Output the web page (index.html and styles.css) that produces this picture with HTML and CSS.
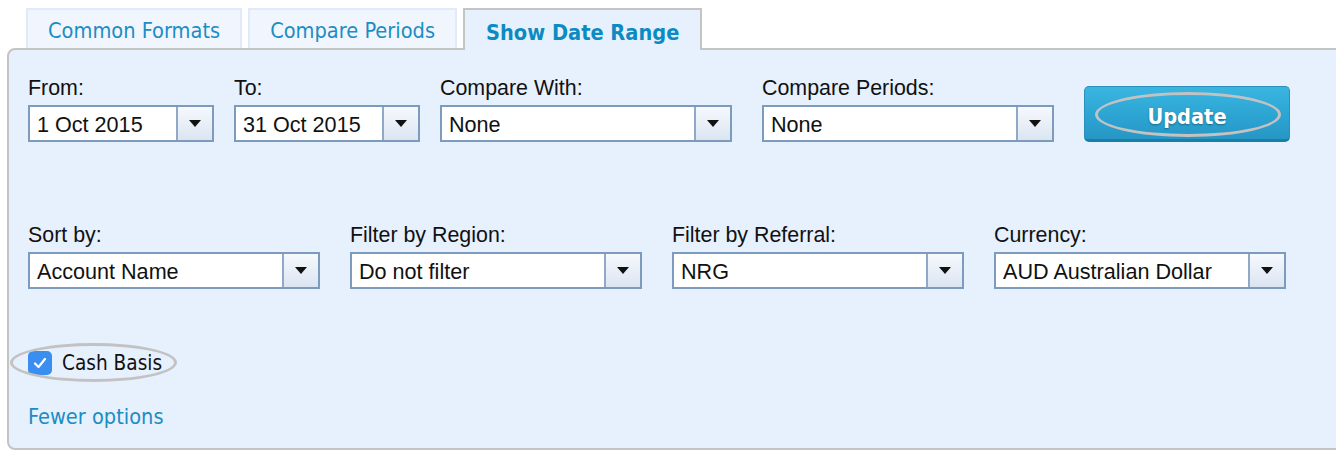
FILE: index.html
```html
<!DOCTYPE html>
<html lang="en">
<head>
	<meta charset="UTF-8">
	<title>Report Options</title>
	<link rel="stylesheet" href="styles.css">
</head>
<body>
	<div class="tabs">
		<div class="tab">Common Formats</div>
		<div class="tab">Compare Periods</div>
		<div class="tab active">Show Date Range</div>
	</div>

	<div class="panel">
		<div class="row">
			<div class="field small">
				<label>From:</label>
				<div class="select"><span class="value">1 Oct 2015</span><span class="arrow"></span></div>
			</div>
			<div class="field small">
				<label>To:</label>
				<div class="select"><span class="value">31 Oct 2015</span><span class="arrow"></span></div>
			</div>
			<div class="field wide">
				<label>Compare With:</label>
				<div class="select"><span class="value">None</span><span class="arrow"></span></div>
			</div>
			<div class="field wide">
				<label>Compare Periods:</label>
				<div class="select"><span class="value">None</span><span class="arrow"></span></div>
			</div>
			<button class="btnUpdate"><span>Update</span></button>
		</div>

		<div class="row row2">
			<div class="field wide">
				<label>Sort by:</label>
				<div class="select"><span class="value">Account Name</span><span class="arrow"></span></div>
			</div>
			<div class="field wide">
				<label>Filter by Region:</label>
				<div class="select"><span class="value">Do not filter</span><span class="arrow"></span></div>
			</div>
			<div class="field wide">
				<label>Filter by Referral:</label>
				<div class="select"><span class="value">NRG</span><span class="arrow"></span></div>
			</div>
			<div class="field wide">
				<label>Currency:</label>
				<div class="select"><span class="value">AUD Australian Dollar</span><span class="arrow"></span></div>
			</div>
		</div>

		<div class="cashBasis">
			<span class="checkbox">
				<svg width="14" height="12" viewBox="0 0 14 12"><path d="M2 6.5 L5.5 10 L12 2" fill="none" stroke="#fff" stroke-width="2.2" stroke-linecap="round" stroke-linejoin="round"/></svg>
			</span>
			<span>Cash Basis</span>
		</div>

		<a class="fewer" href="#">Fewer options</a>
	</div>
</body>
</html>
```

FILE: styles.css
```css
body {
	margin: 0px;
	background-color: white;
	font-family: "Liberation Sans", Arial, sans-serif;
}
.tabs{
	display: flex;
	align-items: flex-end;
	gap: 6px;
	padding-left: 26px;
	padding-top: 8px;
	font-family: "DejaVu Sans Condensed", "DejaVu Sans", sans-serif;
	font-size: 21.6px;
	position: relative;
	z-index: 2;
}
.tab{
	height: 38px;
	line-height: 42px;
	padding: 0px 20px;
	background-color: #f1f6fe;
	border: 2px solid #e1eaf9;
	border-bottom: none;
	color: #1a8dc4;
}
.tab.active{
	height: 40px;
	line-height: 45px;
	padding: 0px 21px;
	margin-left: 0px;
	margin-bottom: -2px;
	background-color: #e7f0fd;
	border-color: #c4c4c4;
	font-weight: bold;
	color: #0b8bc2;
}
.panel{
	margin-left: 7px;
	margin-right: -20px;
	height: 372px;
	padding: 26px 0px 0px 19px;
	background-color: #e7f0fd;
	border: 2px solid #c4c4c4;
	border-radius: 8px;
	position: relative;
	z-index: 1;
}
.row{
	display: flex;
	gap: 30px;
	align-items: flex-start;
}
.row2{
	margin-top: 81px;
}
.field label{
	display: block;
	height: 24px;
	line-height: 25px;
	font-size: 21.4px;
	color: #111;
	margin-bottom: 5px;
}
.field.small{
	width: 186px;
	margin-right: -10px;
}
.field.wide{
	width: 292px;
}
.select{
	display: flex;
	height: 33px;
	background-color: white;
	border: 2px solid #7d9bbc;
}
.select .value{
	flex: 1;
	padding-left: 7px;
	font-size: 21.6px;
	line-height: 35px;
	color: #111;
	white-space: nowrap;
	overflow: hidden;
}
.select .arrow{
	width: 34px;
	border-left: 2px solid #8fa9c6;
	background: linear-gradient(to bottom, #f6f9fd, #dbe5f1);
	position: relative;
}
.select .arrow::after{
	content: "";
	position: absolute;
	left: 11px;
	top: 13px;
	border-left: 6.5px solid transparent;
	border-right: 6.5px solid transparent;
	border-top: 7px solid #111;
}
.btnUpdate{
	margin-top: 10px;
	width: 206px;
	height: 56px;
	padding: 6px 0px 0px 0px;
	background: linear-gradient(to bottom, #3ab5e0, #2ba3d2 60%, #2796c4);
	border: 1px solid #2a8fbd;
	border-bottom: 3px solid #1680ad;
	border-radius: 5px;
	color: white;
	font-family: "DejaVu Sans Condensed", "DejaVu Sans", sans-serif;
	font-weight: bold;
	font-size: 21.6px;
	text-shadow: 0px 1px 2px rgba(0,0,0,0.35);
	position: relative;
}
.btnUpdate::after{
	content: "";
	position: absolute;
	left: 10px;
	top: 5px;
	width: 180px;
	height: 39px;
	border: 3px solid #c2c2c2;
	border-radius: 50%;
}
.cashBasis{
	margin-top: 62px;
	display: flex;
	align-items: center;
	gap: 10px;
	height: 24px;
	font-family: "DejaVu Sans Condensed", "DejaVu Sans", sans-serif;
	font-size: 20.6px;
	color: #111;
	position: relative;
}
.cashBasis::before{
	content: "";
	position: absolute;
	left: -18px;
	top: -8px;
	width: 161px;
	height: 33px;
	border: 3px solid #c2c2c2;
	border-radius: 50%;
}
.checkbox{
	width: 24px;
	height: 24px;
	border-radius: 5px;
	background-color: #3a8ef0;
	display: flex;
	align-items: center;
	justify-content: center;
}
.fewer{
	display: block;
	margin-top: 30px;
	height: 24px;
	line-height: 24px;
	font-family: "DejaVu Sans Condensed", "DejaVu Sans", sans-serif;
	font-size: 21.6px;
	color: #1a8dc4;
	text-decoration: none;
}
```
